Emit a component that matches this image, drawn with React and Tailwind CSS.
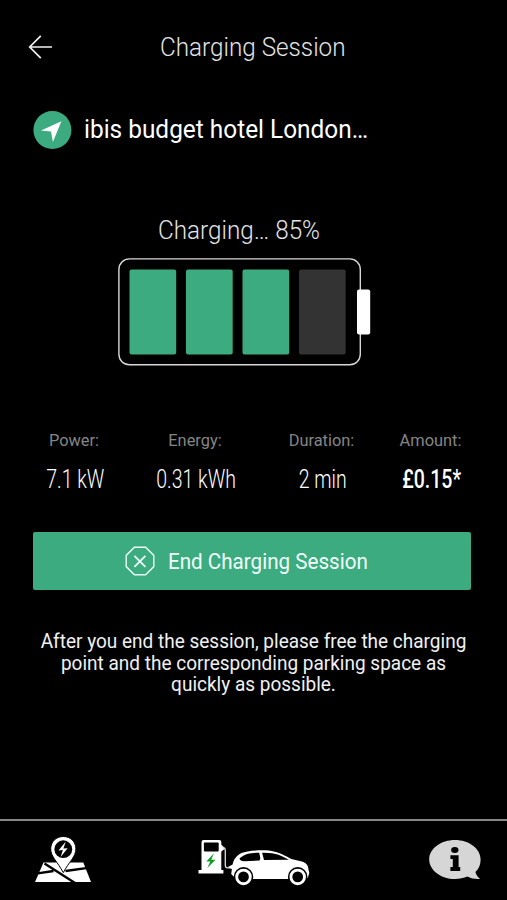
const stats = [
  { label: "Power:", value: "7.1 kW", column: "w-[84px]" },
  { label: "Energy:", value: "0.31 kWh", column: "w-[158px]" },
  { label: "Duration:", value: "2 min", column: "w-[95px]" },
  { label: "Amount:", value: "£0.15*", column: "w-[123px]", bold: true },
];

const bars = [
  { x: 11.5, color: "#3cab80" },
  { x: 68, color: "#3cab80" },
  { x: 124.5, color: "#3cab80" },
  { x: 181, color: "#333333" },
];

const BackIcon = () => (
  <svg width="26" height="26" viewBox="0 0 26 26" fill="none" stroke="#f0f0f0" strokeWidth="1.7">
    <path d="M25 13H2.7M13.8 1.9L2.7 13l11.1 11.1" />
  </svg>
);

const LocationIcon = () => (
  <svg width="39" height="38" viewBox="0 0 39 38">
    <circle cx="19.4" cy="19" r="19" fill="#3cab80" />
    <path d="M28.4 10.2L8 19.6l10 .9 1.9 10.4z" fill="#fff" />
  </svg>
);

const StopIcon = () => (
  <svg width="30" height="30" viewBox="0 0 30 30" fill="none" stroke="#e9fff5">
    <path d="M9.4 1.2h11.2l8.2 8.2v11.2l-8.2 8.2H9.4l-8.2-8.2V9.4z" strokeWidth="1.4" />
    <path d="M9.4 9.8l11 11M20.4 9.8l-11 11" strokeWidth="1.9" />
  </svg>
);

const MapIcon = () => (
  <svg width="58" height="48" viewBox="0 0 58 48">
    <path d="M9.5 27.5h39.8L57 47H1z" fill="#fff" />
    <path d="M2 38.6l17.5-2.6M10.5 28.6L41 48M31.5 36l26-3.6" stroke="#000" strokeWidth="2.4" />
    <path
      d="M29.3 1.5c-7.3 0-12.6 5.3-12.6 12.4 0 7.8 6.9 12.8 12.6 23.7C35 26.7 41.9 21.7 41.9 13.9c0-7.1-5.3-12.4-12.6-12.4z"
      fill="#fff"
      stroke="#000"
      strokeWidth="1"
    />
    <circle cx="29.3" cy="14.2" r="8.9" fill="#000" />
    <path d="M31.8 6.5l-7.3 9 4.4-.5-2.3 7 7.1-8.7-4.3.3z" fill="#fff" />
  </svg>
);

const CarIcon = () => (
  <svg width="114" height="47" viewBox="0 0 114 47">
    <path d="M4.5 3q0-2 2-2h15.8q2 0 2 2v28h2.1v3.5H1.5V31h3z" fill="#fff" />
    <rect x="6.9" y="3.6" width="14.8" height="9" rx="1" fill="#000" />
    <path d="M16.8 14.5l-7.5 8h4l-3 6.6 8.2-8.3h-4.2z" fill="#109b22" />
    <path d="M23 4.5l3.2 3q1 1 .8 3L23.5 13z" fill="#fff" />
    <path d="M25.5 8.5q2.8 0 2.8 3v15q0 2.3 2.5 2.3h5" fill="none" stroke="#ddd" strokeWidth="1.3" />
    <path
      d="M35.6 25.5c1-4.8 3.6-8.8 8.9-11.4 5.5-2.6 20.5-3.4 29-2.3 9.5 1.6 14.7 5 20.8 8.3l10.5 2.4c4.5 1.1 6.5 4 6.7 8.2l.8 3.4-1.5 5-7 .9H39l-4.8-4.9.7-5.1-4-2z"
      fill="#fff"
    />
    <path
      d="M62.2 13.7c-6.7 0-14.2.8-19.5 5.6-.8 1.2 1.7 2.9 4.5 3l15.3-.8q.8-1 .8-2.8zM65.1 13.7l1.9 7.4 25-.3c-6.8-4-13.4-7.4-26.9-7.1z"
      fill="#000"
    />
    <circle cx="46.5" cy="37.9" r="9.8" fill="#000" />
    <circle cx="100.7" cy="37.9" r="9.8" fill="#000" />
    <circle cx="46.5" cy="37.9" r="6.8" fill="#000" stroke="#fff" strokeWidth="2.9" />
    <circle cx="100.7" cy="37.9" r="6.8" fill="#000" stroke="#fff" strokeWidth="2.9" />
  </svg>
);

const InfoIcon = () => (
  <svg width="53" height="42" viewBox="0 0 53 42">
    <path
      d="M27 1C12.9 1 1.2 9.7 1.2 20.4S12.9 40 27 40c4.5 0 8.8-.8 12.4-2.4 3 2 7.8 2.6 12.8 2.4-2.6-1.9-4-4.1-4.8-7 3.5-3.3 5.2-7.2 5.2-12.6C52.6 9.7 41 1 27 1z"
      fill="#d6d6d6"
    />
    <ellipse cx="26.8" cy="10.9" rx="3.7" ry="3" fill="#000" />
    <path d="M22.4 16.3h8.2v11.8h1.6v3.9h-9.8v-3.9h2.4v-8h-2.4z" fill="#000" />
  </svg>
);

const Battery = () => (
  <svg width="253" height="108" viewBox="0 0 253 108">
    <rect x="0.9" y="0.9" width="241.4" height="105.9" rx="10.5" fill="none" stroke="#d8d8d8" strokeWidth="1.4" />
    {bars.map((bar) => (
      <rect key={bar.x} x={bar.x} y="11.5" width="46.7" height="85" rx="2" fill={bar.color} />
    ))}
    <rect x="239" y="31.5" width="13.2" height="45" rx="2" fill="#fff" />
  </svg>
);

const App = () => {
  return (
    <div className="flex flex-col w-[507px] h-[900px] overflow-hidden bg-black text-white font-['Roboto','Liberation_Sans',sans-serif]">
      <header className="flex items-center h-[94px] pl-[27px]">
        <button type="button" aria-label="Back">
          <BackIcon />
        </button>
        <h1 className="ml-[107px] mt-[2px] text-[25px] font-light whitespace-nowrap text-[#e4e4e4] origin-left scale-x-[0.97]">
          Charging Session
        </h1>
      </header>

      <main className="flex flex-col grow">
        <div className="flex items-center h-[38px] mt-[17px] pl-[33px]">
          <LocationIcon />
          <p className="ml-[12px] text-[25px] whitespace-nowrap origin-left scale-x-[0.976]">
            ibis budget hotel London…
          </p>
        </div>

        <p className="mt-[67px] ml-[158px] h-[30px] leading-[30px] text-[25px] font-light whitespace-nowrap text-[#e4e4e4] origin-left scale-x-[0.97]">
          Charging… 85%
        </p>
        <div className="mt-[12px] ml-[118px] h-[108px]">
          <Battery />
        </div>

        <div className="flex mt-[65px] pl-[32px]">
          {stats.map((stat) => (
            <div key={stat.label} className={`flex flex-col items-center shrink-0 ${stat.column}`}>
              <span className="text-[16.4px] leading-[20px] text-[#858585]">{stat.label}</span>
              <span
                className={`mt-[14px] ml-[2px] text-[25px] leading-[30px] whitespace-nowrap scale-x-[0.78] ${
                  stat.bold ? "font-medium" : "font-light"
                }`}
              >
                {stat.value}
              </span>
            </div>
          ))}
        </div>

        <button
          type="button"
          className="flex items-center h-[58px] w-[438px] mt-[37px] ml-[33px] pl-[92px] rounded-[2px] bg-[#3cab80] text-[#f2fffa]"
        >
          <StopIcon />
          <span className="ml-[13px] text-[22px] whitespace-nowrap origin-left scale-x-[0.937]">
            End Charging Session
          </span>
        </button>

        <p className="mt-[41px] text-center text-[20px] leading-[21.7px] text-[#f0f0f0] whitespace-nowrap scale-x-[0.95]">
          After you end the session, please free the charging
          <br />
          point and the corresponding parking space as
          <br />
          quickly as possible.
        </p>
      </main>

      <nav className="flex h-[81px] border-t-2 border-[#868686] pl-[34px] pt-[14px]">
        <MapIcon />
        <div className="ml-[105px] mt-[4px]">
          <CarIcon />
        </div>
        <div className="ml-[117px] mt-[4px]">
          <InfoIcon />
        </div>
      </nav>
    </div>
  );
};

export default App;
